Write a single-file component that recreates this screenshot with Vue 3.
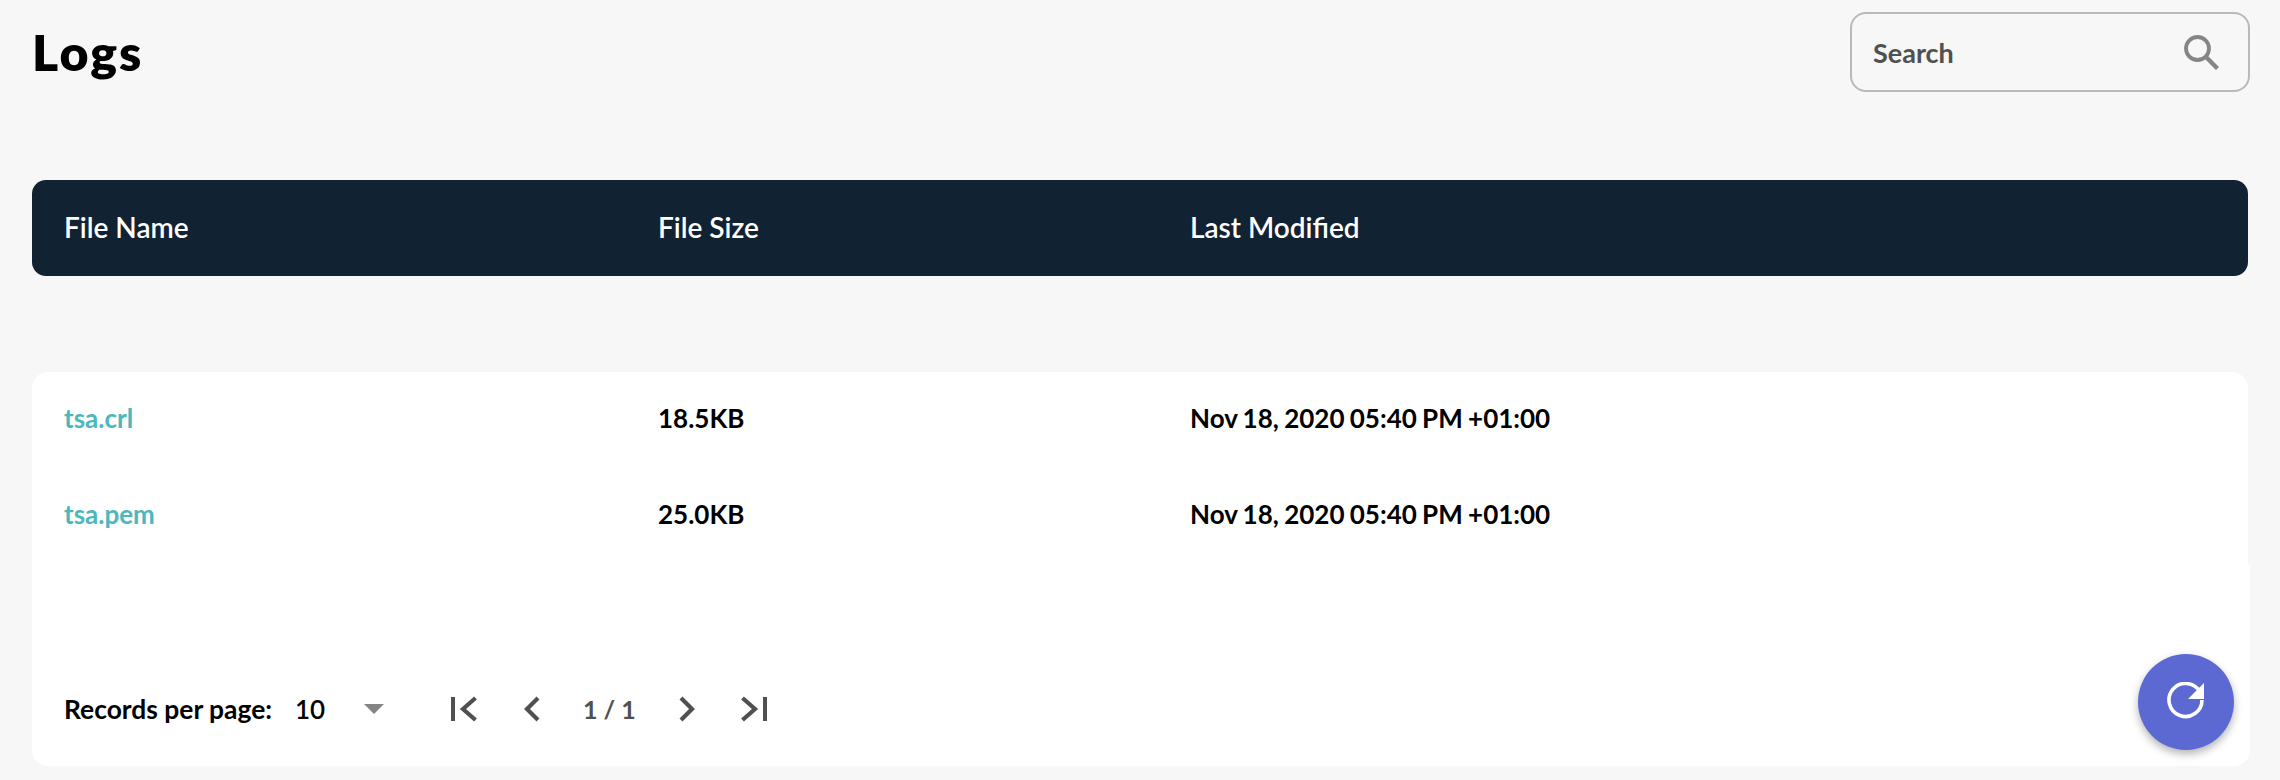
<script setup>
const rows = [
  { name: 'tsa.crl', size: '18.5KB', modified: 'Nov 18, 2020 05:40 PM +01:00' },
  { name: 'tsa.pem', size: '25.0KB', modified: 'Nov 18, 2020 05:40 PM +01:00' },
]
</script>

<template>
  <div class="page">
    <header class="top">
      <h1 class="title">Logs</h1>
      <div class="search">
        <span class="search-text">Search</span>
        <svg class="search-icon" width="36" height="36" viewBox="0 0 36 36" fill="none" stroke="#858585">
          <circle cx="14.5" cy="14.5" r="11.5" stroke-width="3.8" />
          <path d="M23 23 L34.5 34.5" stroke-width="4.4" />
        </svg>
      </div>
    </header>

    <div class="thead row-grid">
      <div>File Name</div>
      <div>File Size</div>
      <div>Last Modified</div>
    </div>

    <div class="card">
      <div class="tbody">
        <div v-for="r in rows" :key="r.name" class="row row-grid">
          <a class="link">{{ r.name }}</a>
          <div>{{ r.size }}</div>
          <div class="date">{{ r.modified }}</div>
        </div>
      </div>
      <div class="footer">
        <span class="rpp">Records per page:</span>
        <span class="rpp-val">10</span>
        <svg class="caret" width="20" height="10" viewBox="0 0 20 10"><path d="M0 0H20L10 10Z" fill="#858585" /></svg>
        <div class="pager">
          <svg width="26" height="26" viewBox="0 0 26 26" fill="none" stroke="#505050" stroke-width="4.2">
            <path d="M2 1V25" stroke-width="4" />
            <path d="M24.5 2 L12 13 L24.5 24" />
          </svg>
          <svg class="p-prev" width="16" height="26" viewBox="0 0 16 26" fill="none" stroke="#505050" stroke-width="4.2">
            <path d="M14 2 L3 13 L14 24" />
          </svg>
          <span class="count">1 / 1</span>
          <svg class="p-next" width="16" height="26" viewBox="0 0 16 26" fill="none" stroke="#505050" stroke-width="4.2">
            <path d="M2 2 L13 13 L2 24" />
          </svg>
          <svg class="p-last" width="26" height="26" viewBox="0 0 26 26" fill="none" stroke="#505050" stroke-width="4.2">
            <path d="M1.5 2 L14 13 L1.5 24" />
            <path d="M24 1V25" stroke-width="4" />
          </svg>
        </div>
      </div>
    </div>

    <button class="fab" aria-label="Refresh">
      <svg width="40" height="40" viewBox="0 0 40 40" fill="none">
        <path d="M36 18 A16.5 16.5 0 1 1 33.8 9.75" stroke="#fff" stroke-width="3.6" />
        <path d="M38 1 V17 H22 Z" fill="#fff" />
      </svg>
    </button>
  </div>
</template>

<style>
html, body { margin: 0; background: #f7f7f7; }
</style>

<style scoped>
.page {
  position: relative;
  width: 2280px;
  height: 780px;
  overflow: hidden;
  box-sizing: border-box;
  padding: 12px 30px 0 32px;
  font-family: Lato, "Liberation Sans", sans-serif;
  background: #f7f7f7;
}
.top {
  display: flex;
  justify-content: space-between;
  align-items: flex-start;
  height: 168px;
  box-sizing: border-box;
}
.title {
  margin: 0;
  font-family: Lato, "Noto Sans", sans-serif;
  font-size: 50px;
  line-height: 80px;
  font-weight: 800;
  letter-spacing: 2px;
  color: #000;
}
.search {
  box-sizing: border-box;
  width: 400px;
  height: 80px;
  border: 2px solid #b9b9b9;
  border-radius: 16px;
  display: flex;
  align-items: center;
  justify-content: space-between;
  padding: 0 29px 0 21px;
}
.search-text {
  font-size: 27px;
  font-weight: 700;
  color: #505050;
}
.search-icon { flex: none; }
.row-grid {
  display: grid;
  grid-template-columns: 594px 532px 1fr;
  padding-left: 32px;
  align-items: center;
  font-size: 26px;
  box-sizing: border-box;
}
.thead {
  height: 96px;
  width: 2216px;
  border-radius: 14px;
  background: #112233;
  color: #fff;
  font-size: 28px;
  font-weight: 600;
  padding-bottom: 3px;
  margin-bottom: 96px;
}
.card { width: 2218px; }
.tbody {
  width: 2216px;
  background: #fff;
  border-radius: 16px 16px 0 0;
}
.row {
  height: 96px;
  color: #000;
  font-weight: 700;
  padding-bottom: 4px;
}
.date { word-spacing: -1px; }
.link { color: #4cb8bb; font-weight: 700; }
.footer {
  height: 202px;
  box-sizing: border-box;
  background: #fff;
  border-radius: 0 0 16px 16px;
  display: flex;
  align-items: center;
  padding: 88px 0 0 32px;
  font-size: 26.4px;
  color: #000;
}
.rpp { font-weight: 700; width: 231px; flex: none; }
.rpp-val { font-size: 26px; font-weight: 600; width: 69px; flex: none; }
.caret { flex: none; }
.pager {
  display: flex;
  align-items: center;
  margin-left: 67px;
  color: #505050;
}
.p-prev { margin-left: 47px; }
.count {
  margin-left: 43px;
  width: 50px;
  font-size: 25px;
  font-weight: 700;
  white-space: nowrap;
}
.p-next { margin-left: 46px; }
.p-last { margin-left: 46px; }
.fab {
  position: absolute;
  left: 2138px;
  top: 654px;
  width: 96px;
  height: 96px;
  border: 0;
  padding: 0;
  border-radius: 50%;
  background: #5c69d2;
  box-shadow: 0 4px 8px rgba(0, 0, 0, 0.3);
  display: flex;
  align-items: center;
  justify-content: center;
}
</style>
